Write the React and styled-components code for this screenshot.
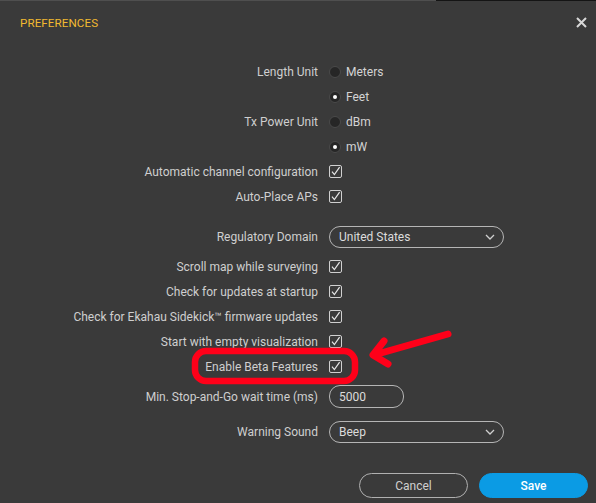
import React from 'react';
import styled, { createGlobalStyle } from 'styled-components';

const GlobalStyle = createGlobalStyle`
  html, body {
    margin: 0;
    padding: 0;
    background: #3a3a3a;
  }
  body {
    font-family: Roboto, "Liberation Sans", sans-serif;
  }
`;

export const Dialog = styled.div`
  position: relative;
  width: 596px;
  height: 503px;
  background: #3a3a3a;
  display: flex;
  flex-direction: column;
  overflow: hidden;
`;
export const TopEdge = styled.div`
  height: 1px;
  background: linear-gradient(to right, #4f4f4f 0, #4f4f4f 436px, #141414 436px);
`;
export const Header = styled.div`
  height: 43px;
  display: flex;
  align-items: center;
  justify-content: space-between;
  padding: 0 8px 0 20px;
`;
export const Title = styled.div`
  color: #f2b930;
  font-size: 11.6px;
  letter-spacing: 0.1px;
`;
export const Close = styled.button`
  background: none;
  border: 0;
  padding: 0;
  width: 12px;
  height: 12px;
  display: flex;
  align-items: center;
  justify-content: center;
  margin-right: 1px;
`;
export const Body = styled.div`
  padding-top: 15px;
  display: flex;
  flex-direction: column;
`;
export const Row = styled.div`
  display: grid;
  grid-template-columns: 318px 1fr;
  column-gap: 11px;
  align-items: center;
  height: ${(props) => (props.tall ? '35px' : '25px')};
  margin-top: ${(props) => props.gap || 0}px;
`;
export const Label = styled.span`
  text-align: right;
  color: #cfcfcf;
  font-size: 12px;
  white-space: nowrap;
`;
export const Option = styled.label`
  display: flex;
  align-items: center;
  gap: 5px;
  color: #d4d4d4;
  font-size: 12px;
`;
export const Radio = styled.span`
  width: 10px;
  height: 10px;
  border-radius: 50%;
  background: #262626;
  border: 1px solid #4a4a4a;
  display: flex;
  align-items: center;
  justify-content: center;
  &::after {
    content: '';
    width: 4px;
    height: 4px;
    border-radius: 50%;
    background: ${(props) => (props.on ? '#ffffff' : 'transparent')};
  }
`;
export const Box = styled.span`
  width: 11px;
  height: 11px;
  border: 1px solid #d0d0d0;
  border-radius: 2px;
  display: flex;
  align-items: center;
  justify-content: center;
`;
export const Select = styled.div`
  width: 175px;
  height: 22px;
  box-sizing: border-box;
  border: 1px solid #b5b5b5;
  border-radius: 11px;
  display: flex;
  align-items: center;
  justify-content: space-between;
  padding: 0 8px 0 9px;
  color: #dcdcdc;
  font-size: 12px;
`;
export const Input = styled.div`
  width: 75px;
  height: 23px;
  box-sizing: border-box;
  border: 1px solid #b5b5b5;
  border-radius: 11px;
  display: flex;
  align-items: center;
  padding-left: 9px;
  color: #dcdcdc;
  font-size: 12px;
`;
export const Footer = styled.div`
  margin-top: auto;
  display: flex;
  justify-content: flex-end;
  gap: 11px;
  padding: 0 8px 5px 0;
`;
export const Button = styled.button`
  width: 109px;
  height: 25px;
  box-sizing: border-box;
  border-radius: 13px;
  font-family: Roboto, "Liberation Sans", sans-serif;
  font-size: 12px;
  border: 1px solid ${(props) => (props.primary ? '#0b9be4' : '#b0b0b0')};
  background: ${(props) => (props.primary ? '#0b9be4' : 'transparent')};
  color: ${(props) => (props.primary ? '#ffffff' : '#d0d0d0')};
  font-weight: ${(props) => (props.primary ? 500 : 400)};
`;
export const Markup = styled.svg`
  position: absolute;
  left: 0;
  top: 0;
  pointer-events: none;
`;

const Check = () => (
  <Box>
    <svg width="11" height="11" viewBox="0 0 11 11">
      <path d="M2 5.6 L4.4 8.6 L9.6 1.2" fill="none" stroke="#e6e6e6" strokeWidth="1.2" />
    </svg>
  </Box>
);

const Chevron = () => (
  <svg width="10" height="6" viewBox="0 0 10 6">
    <path d="M1 1 L5 5 L9 1" fill="none" stroke="#cfcfcf" strokeWidth="1.3" />
  </svg>
);

const checks = [
  'Scroll map while surveying',
  'Check for updates at startup',
  'Check for Ekahau Sidekick™ firmware updates',
  'Start with empty visualization',
  'Enable Beta Features',
];

const App = () => {
  return (
    <Dialog>
      <GlobalStyle />
      <TopEdge />
      <Header>
        <Title>PREFERENCES</Title>
        <Close>
          <svg width="11" height="11" viewBox="0 0 11 11">
            <path d="M1 1 L10 10 M10 1 L1 10" stroke="#d8d8d8" strokeWidth="2" />
          </svg>
        </Close>
      </Header>
      <Body>
        <Row>
          <Label>Length Unit</Label>
          <Option><Radio />Meters</Option>
        </Row>
        <Row>
          <Label />
          <Option><Radio on />Feet</Option>
        </Row>
        <Row>
          <Label>Tx Power Unit</Label>
          <Option><Radio />dBm</Option>
        </Row>
        <Row>
          <Label />
          <Option><Radio on />mW</Option>
        </Row>
        <Row>
          <Label>Automatic channel configuration</Label>
          <Check />
        </Row>
        <Row>
          <Label>Auto-Place APs</Label>
          <Check />
        </Row>
        <Row tall gap={10}>
          <Label>Regulatory Domain</Label>
          <Select>United States<Chevron /></Select>
        </Row>
        {checks.map((text, i) => (
          <Row key={i}>
            <Label>{text}</Label>
            <Check />
          </Row>
        ))}
        <Row tall>
          <Label>Min. Stop-and-Go wait time (ms)</Label>
          <Input>5000</Input>
        </Row>
        <Row tall>
          <Label>Warning Sound</Label>
          <Select>Beep<Chevron /></Select>
        </Row>
      </Body>
      <Footer>
        <Button>Cancel</Button>
        <Button primary>Save</Button>
      </Footer>
      <Markup width="596" height="503" viewBox="0 0 596 503">
        <rect x="195" y="351" width="160" height="30" rx="11" fill="none" stroke="#ff0019" strokeWidth="6.5" />
        <path
          d="M448 334 L374 355 M384 341 L373 355 L388 364"
          fill="none"
          stroke="#ff0019"
          strokeWidth="7"
          strokeLinecap="round"
          strokeLinejoin="round"
        />
      </Markup>
    </Dialog>
  );
};

export default App;
